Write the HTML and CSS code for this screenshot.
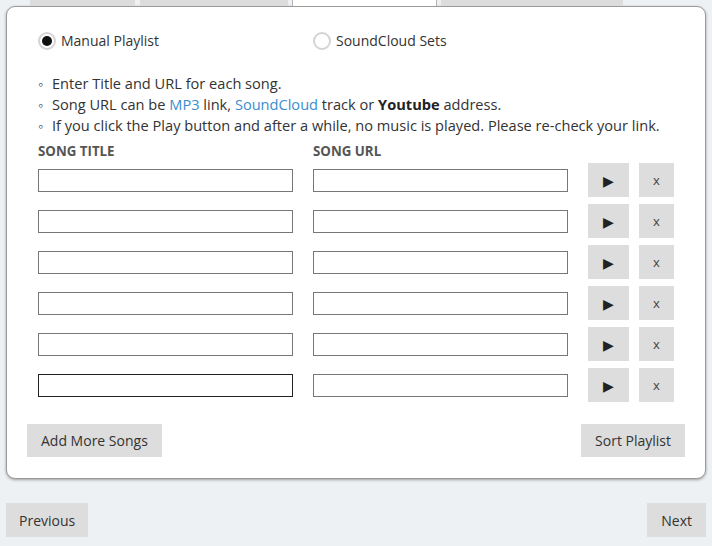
FILE: index.html
```html
<!DOCTYPE html>
<html>
<head>
<meta charset="utf-8">
<link rel="stylesheet" href="styles.css">
</head>
<body>
<div class="tabs">
  <div class="tab t1"></div>
  <div class="tab t2"></div>
  <div class="tab t3 active"></div>
  <div class="tab t4"></div>
</div>
<div class="panel">
  <div class="inner">
    <div class="radios">
      <label class="radio"><span class="dot checked"></span>Manual Playlist</label>
      <label class="radio second"><span class="dot"></span>SoundCloud Sets</label>
    </div>
    <ul class="notes">
      <li>Enter Title and URL for each song.</li>
      <li>Song URL can be <a>MP3</a> link, <a>SoundCloud</a> track or <b>Youtube</b> address.</li>
      <li>If you click the Play button and after a while, no music is played. Please re-check your link.</li>
    </ul>
    <div class="heads"><span class="h1">SONG TITLE</span><span>SONG URL</span></div>
    <div class="rows">
      <div class="row"><div class="field"></div><div class="field"></div><div class="btn play">&#9654;</div><div class="btn del">x</div></div>
      <div class="row"><div class="field"></div><div class="field"></div><div class="btn play">&#9654;</div><div class="btn del">x</div></div>
      <div class="row"><div class="field"></div><div class="field"></div><div class="btn play">&#9654;</div><div class="btn del">x</div></div>
      <div class="row"><div class="field"></div><div class="field"></div><div class="btn play">&#9654;</div><div class="btn del">x</div></div>
      <div class="row"><div class="field"></div><div class="field"></div><div class="btn play">&#9654;</div><div class="btn del">x</div></div>
      <div class="row"><div class="field focus"></div><div class="field"></div><div class="btn play">&#9654;</div><div class="btn del">x</div></div>
    </div>
  </div>
  <div class="actions">
    <div class="btn big">Add More Songs</div>
    <div class="btn big">Sort Playlist</div>
  </div>
</div>
<div class="nav">
  <div class="btn big">Previous</div>
  <div class="btn big">Next</div>
</div>
</body>
</html>
```
FILE: styles.css
```css
html, body {
  margin: 0;
  padding: 0;
}
body {
  background: #eef1f4;
  font-family: "Open Sans", "Noto Sans", sans-serif;
  font-size: 14px;
  color: #333;
  width: 712px;
  height: 546px;
  overflow: hidden;
}
.tabs {
  display: flex;
  height: 6px;
  padding-left: 30px;
  overflow: hidden;
  position: relative;
  z-index: 2;
}
.tab {
  height: 6px;
  background: #dcdcdc;
  margin-right: 5px;
}
.t1 { width: 105px; }
.t2 { width: 148px; margin-right: 4px; }
.t3 { width: 145px; margin-right: 4px; }
.t4 { width: 182px; }
.tab.active {
  background: #fff;
  border-left: 1px solid #b5b5b5;
  border-right: 1px solid #b5b5b5;
  box-sizing: border-box;
}
.panel {
  margin: 0 6px;
  background: #fff;
  border: 1px solid #9a9a9a;
  border-radius: 9px;
  box-shadow: 0 1px 3px rgba(0,0,0,0.35);
  padding: 0 20px 21px;
}
.inner {
  padding: 24px 11px 0;
}
.radios {
  display: flex;
  height: 20px;
  align-items: center;
  line-height: 20px;
}
.radio {
  display: flex;
  align-items: center;
  width: 275px;
}
.dot {
  width: 14px;
  height: 14px;
  border: 2px solid #d4d4d4;
  border-radius: 50%;
  margin-right: 5px;
  position: relative;
  background: #fff;
}
.dot.checked::after {
  content: "";
  position: absolute;
  left: 2px;
  top: 2px;
  width: 10px;
  height: 10px;
  border-radius: 50%;
  background: #111;
}
.notes {
  list-style: none;
  margin: 22px 0 0;
  padding: 0;
  line-height: 21px;
  font-size: 14.6px;
}
.notes li {
  padding-left: 14px;
  position: relative;
}
.notes li::before {
  content: "\25E6";
  position: absolute;
  left: 0;
  top: 0;
  color: #333;
  font-size: 14px;
  font-weight: bold;
}
.notes a {
  color: #3a8dd0;
}
.notes b {
  color: #222;
}
.heads {
  margin-top: 7px;
  display: flex;
  font-size: 13.3px;
  font-weight: bold;
  color: #555;
  line-height: 16px;
}
.h1 { width: 275px; }
.rows {
  margin-top: 4px;
  display: flex;
  flex-direction: column;
  gap: 7px;
}
.row {
  display: flex;
  align-items: center;
  height: 34px;
}
.field {
  width: 255px;
  height: 23px;
  box-sizing: border-box;
  border: 1px solid #777;
  margin-right: 20px;
  background: #fff;
}
.field.focus {
  border-color: #222;
}
.btn {
  background: #dddddd;
  display: flex;
  align-items: center;
  justify-content: center;
  color: #333;
}
.play {
  width: 41px;
  height: 34px;
  font-size: 14px;
  color: #222;
  margin-right: 10px;
}
.del {
  width: 35px;
  height: 34px;
  font-size: 13px;
  color: #444;
}
.actions {
  margin-top: 22px;
  display: flex;
  justify-content: space-between;
}
.big {
  height: 33px;
  padding: 0 14px;
  font-size: 14px;
}
.nav {
  margin: 24px 6px 0;
  display: flex;
  justify-content: space-between;
}
.nav .big {
  height: 34px;
  padding: 0 13px;
}
.nav .big:last-child {
  padding: 0 14px;
}
```
